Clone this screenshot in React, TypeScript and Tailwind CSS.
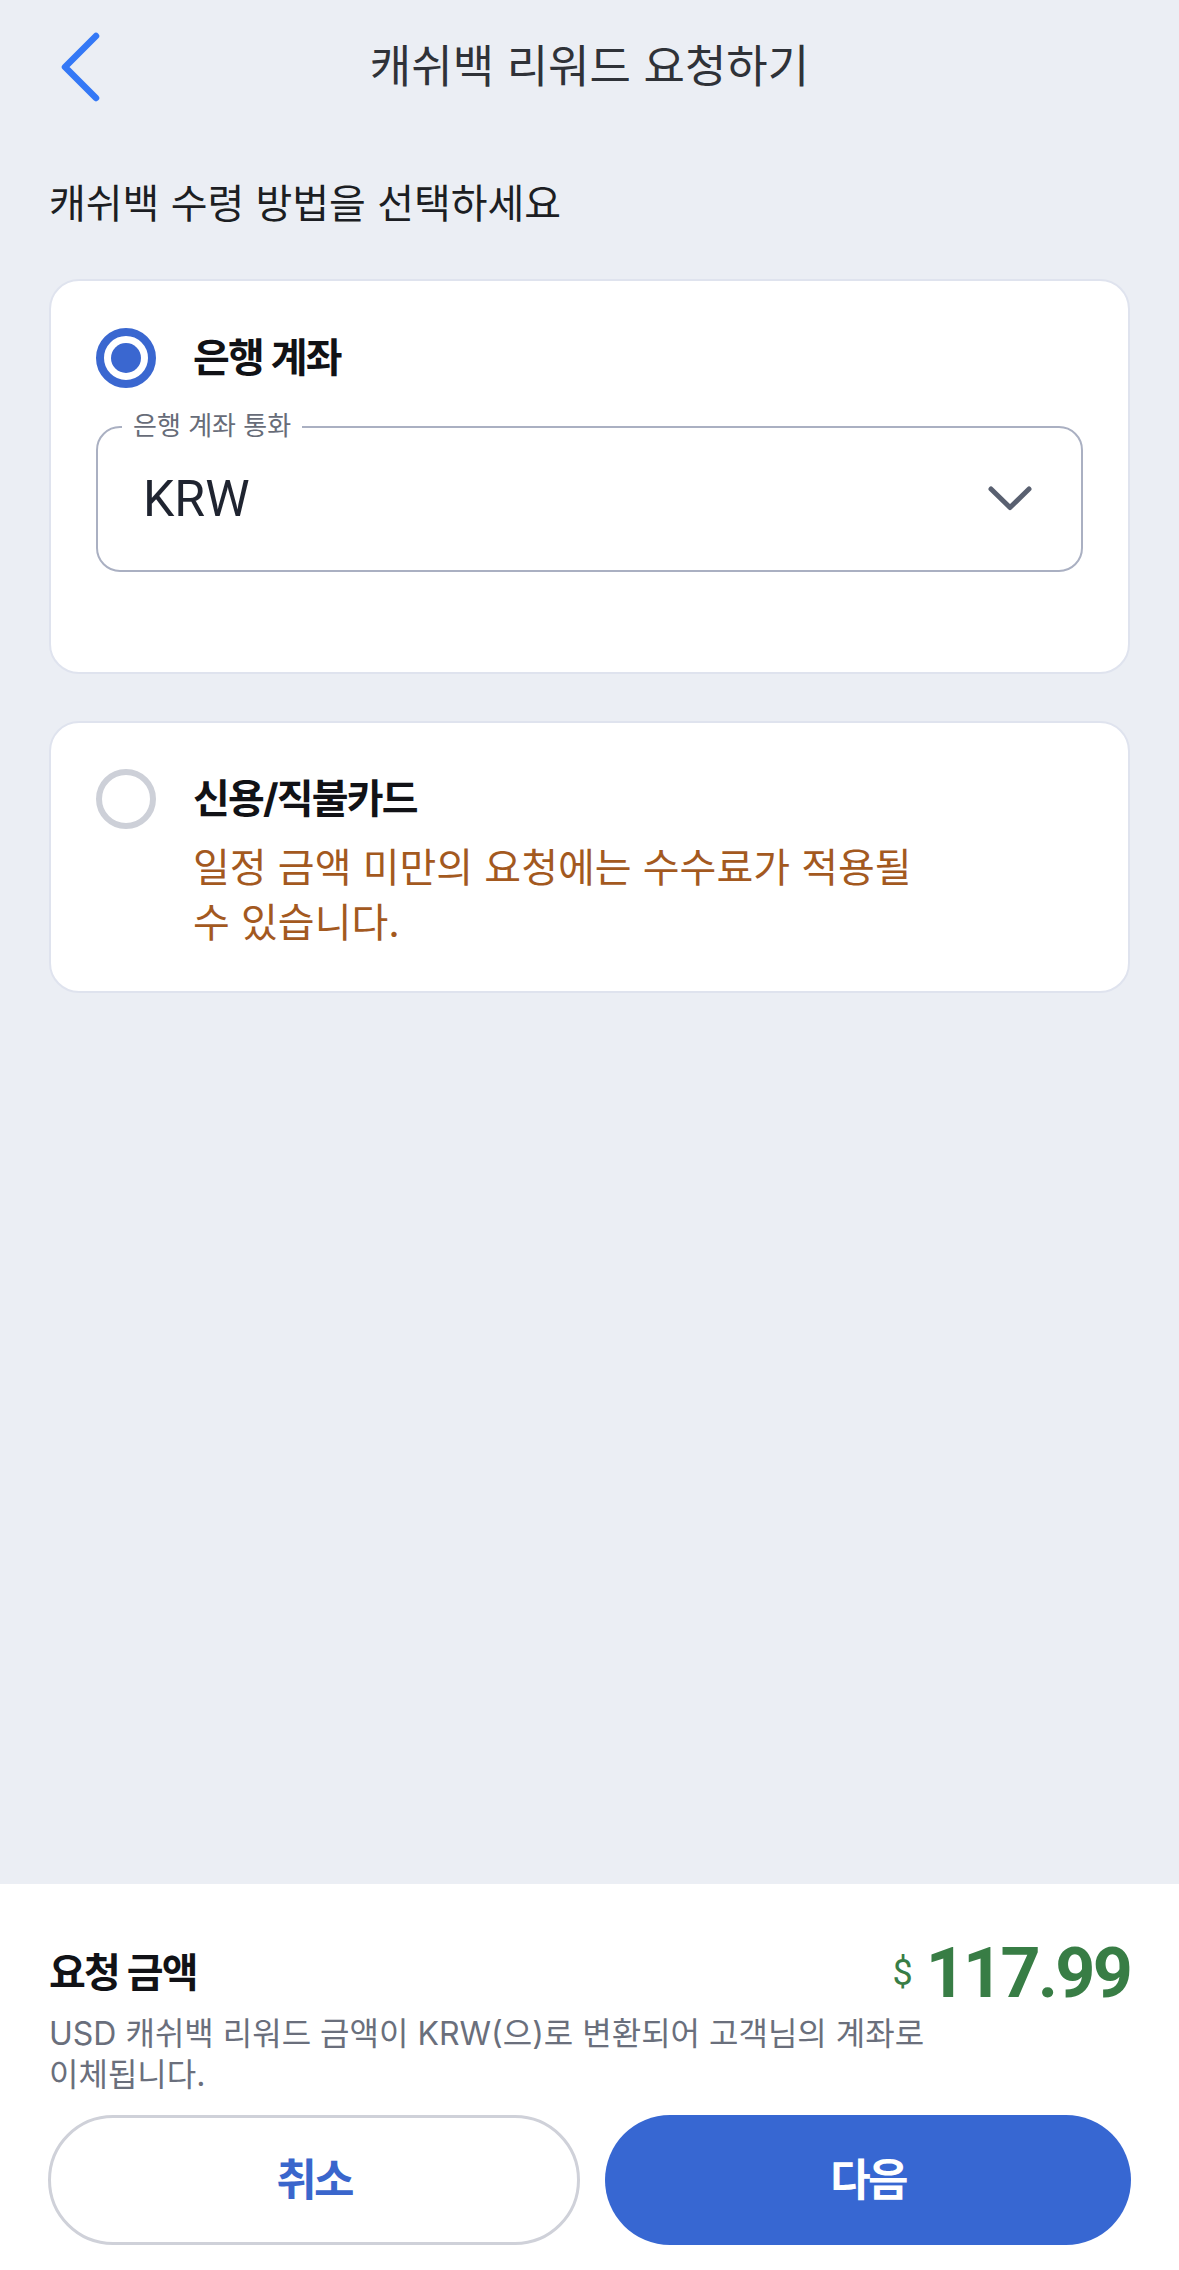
import React from "react";

const KR = "font-['Inter','Noto_Sans_CJK_KR',sans-serif]";

function Radio({ checked }: { checked: boolean }) {
  if (checked) {
    return (
      <div className="w-[60px] h-[60px] shrink-0 rounded-full border-[8px] border-[#3a67d0] flex items-center justify-center">
        <div className="w-[30px] h-[30px] rounded-full bg-[#3a67d0]" />
      </div>
    );
  }
  return <div className="w-[60px] h-[60px] shrink-0 rounded-full border-[6px] border-[#cdd0d8]" />;
}

export default function App() {
  return (
    <div className={`w-[1179px] h-[2270px] bg-[#ebeef4] flex flex-col ${KR}`}>
      <main className="flex-1 flex flex-col">
        {/* Header */}
        <header className="h-[134px] flex items-center">
          <div className="w-[160px] pl-[60px] flex items-center">
            <svg width="42" height="70" viewBox="0 0 42 70" fill="none">
              <path d="M36 4 L5 35 L36 66" stroke="#3478f6" strokeWidth="6.5" strokeLinecap="round" strokeLinejoin="round" />
            </svg>
          </div>
          <h1 className="flex-1 text-center text-[45px] leading-[56px] font-normal text-[#2f3238]">
            캐쉬백 리워드 요청하기
          </h1>
          <div className="w-[160px]" />
        </header>

        <p className="mt-[42px] px-[49px] text-[40px] leading-[56px] text-[#1c1e23]">
          캐쉬백 수령 방법을 선택하세요
        </p>

        {/* Card 1: bank account */}
        <section className="mt-[47px] mx-[49px] bg-white rounded-[30px] border-2 border-[#dfe3ee] pl-[45px] pr-[45px] pt-[47px] pb-[100px]">
          <div className="flex items-center gap-[37px]">
            <Radio checked />
            <span className="text-[40px] leading-[60px] font-bold tracking-[-0.045em] text-[#111216]">은행 계좌</span>
          </div>
          <div className="relative mt-[38px] h-[146px] rounded-[24px] border-2 border-[#aab0c2] flex items-center justify-between pl-[45px] pr-[49px]">
            <span className="absolute -top-[16px] left-[24px] bg-white px-[11px] text-[26px] leading-[28px] text-[#676c78]">
              은행 계좌 통화
            </span>
            <span className="font-['Roboto',sans-serif] text-[50px] leading-[56px] text-[#1f2430]">KRW</span>
            <svg width="44" height="26" viewBox="0 0 44 26" fill="none">
              <path d="M3 3 L22 21.5 L41 3" stroke="#596070" strokeWidth="5" strokeLinecap="round" strokeLinejoin="round" />
            </svg>
          </div>
        </section>

        {/* Card 2: credit/debit card */}
        <section className="mt-[47px] mx-[49px] bg-white rounded-[30px] border-2 border-[#dfe3ee] pl-[45px] pr-[45px] pt-[46px] pb-[41px]">
          <div className="flex items-start gap-[37px]">
            <Radio checked={false} />
            <div className="flex flex-col">
              <span className="text-[40px] leading-[60px] font-bold tracking-[-0.045em] text-[#111216]">신용/직불카드</span>
              <p className="mt-[11px] text-[40px] leading-[55px] tracking-[0em] text-[#a3591f]">
                일정 금액 미만의 요청에는 수수료가 적용될
                <br />
                수 있습니다.
              </p>
            </div>
          </div>
        </section>
      </main>

      {/* Bottom panel */}
      <footer className="bg-white h-[386px] shrink-0 pt-[49px] px-[48px] pb-[25px] flex flex-col">
        <div className="h-[80px] flex items-center justify-between pl-[1px] pr-[1px]">
          <span className="text-[40px] leading-[60px] font-bold tracking-[-0.045em] text-[#111216]">요청 금액</span>
          <div className="flex items-center gap-[13px] text-[#387d45] font-['Roboto',sans-serif]">
            <span className="text-[36px] leading-[40px]">$</span>
            <span className="text-[70px] leading-[80px] font-bold tracking-[-0.04em]">117.99</span>
          </div>
        </div>
        <p className="pl-[1px] text-[32px] leading-[41px] text-[#6a6f7c]">
          USD 캐쉬백 리워드 금액이 KRW(으)로 변환되어 고객님의 계좌로
          <br />
          이체됩니다.
        </p>
        <div className="mt-[20px] flex gap-[25px]">
          <button className="flex-1 h-[130px] rounded-full border-[3px] border-[#cfd1d9] bg-white text-[44px] font-semibold tracking-[-0.06em] text-[#3a66cc]">
            취소
          </button>
          <button className="flex-1 h-[130px] rounded-full bg-[#3767d2] text-[44px] font-semibold tracking-[-0.06em] text-white">
            다음
          </button>
        </div>
      </footer>
    </div>
  );
}
